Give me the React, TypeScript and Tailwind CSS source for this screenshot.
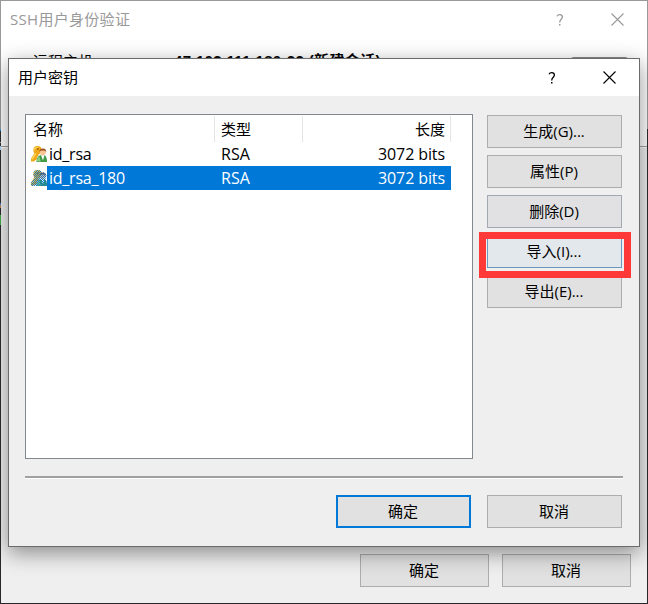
import type { ReactNode } from 'react';
import clsx from 'clsx';

type Key = { name: string; type: string; length: string; selected?: boolean };

const KEYS: Key[] = [
  { name: 'id_rsa', type: 'RSA', length: '3072 bits' },
  { name: 'id_rsa_180', type: 'RSA', length: '3072 bits', selected: true },
];

function CloseIcon() {
  return (
    <svg width="13" height="13" viewBox="0 0 13 13" fill="none" stroke="currentColor" strokeWidth="1.1">
      <path d="M0.5 0.5 12.5 12.5M12.5 0.5 0.5 12.5" />
    </svg>
  );
}

function HelpIcon() {
  return (
    <svg width="8" height="12" viewBox="0 0 8 12" fill="none" stroke="currentColor" strokeWidth="1.3">
      <path d="M1 2.2C1.6 1 2.6.7 3.7.7 5.4.7 6.4 1.6 6.4 3 6.4 5.2 3.7 5.3 3.7 8.4" />
      <path d="M3 10.8h1.5" strokeWidth="1.5" />
    </svg>
  );
}

function KeyUserIcon({ selected }: { selected?: boolean }) {
  return (
    <svg width="16" height="16" viewBox="0 0 16 16">
      <defs>
        <pattern id="dither" width="2" height="2" patternUnits="userSpaceOnUse">
          <path d="M0 0h1v1H0zM1 1h1v1H1z" fill="#0078d7" shapeRendering="crispEdges" />
        </pattern>
      </defs>
      <circle cx="6.5" cy="4.2" r="4.1" fill="#f0a818" />
      <path d="M4.2 6 8 8.5 3.2 15.5H0v-2.8zM4 10.5 6.2 12.2 5 14.2 2.7 13z" fill="#f0a818" />
      <path d="M3.2 4.2C3.6 2.4 5 1.4 7 1.5M5 7.3.9 13.4" stroke="#ffdb5c" strokeWidth="1.2" fill="none" />
      <circle cx="6.7" cy="2.9" r="1" fill="#a86408" />
      <path d="M5.5 16c0-4.2 2-6.8 4.5-6.8h3c2 0 3 3 3 6.8z" fill="#3f9a46" />
      <path d="M10 9.2h3.4L12 14.5z" fill="#fff" />
      <path d="M5.8 15.5c.2-2.5 1.2-4.4 2.6-5l1.4 5z" fill="#8bd083" />
      <circle cx="11.8" cy="6.3" r="2.9" fill="#f8c493" />
      <path d="M8.5 5.8C8.3 3.5 9.8 2.4 12 2.4s3.6 1.3 3.2 3.9l-1.1-1.5-3.9-.3z" fill="#9a5420" />
      {selected && (
        <path
          d="M6.5 0c2.3 0 3.7 1.2 4.1 2.5 2.6-.6 4.8.9 4.8 3.3 0 1.4-.6 2.6-1.4 3.4 1.6.8 2 3.6 2 6.8H0v-3.3l3.6-5.3C2.7 6.5 2.4 5.4 2.4 4.2 2.4 1.8 4.2 0 6.5 0z"
          fill="url(#dither)"
        />
      )}
    </svg>
  );
}

function Button({ children, className }: { children: ReactNode; className?: string }) {
  return (
    <button
      className={clsx(
        'flex h-[33px] shrink-0 items-center justify-center border pb-px pr-px text-[15px] leading-none',
        className ?? 'border-[#adadad] bg-[#e1e1e1]',
      )}
    >
      {children}
    </button>
  );
}

function KeyList() {
  return (
    <div className="h-[345px] w-[448px] border border-[#828790] bg-white">
      <div className="mt-px flex h-[26px] w-[425px] text-[15px] leading-[27px]">
        <div className="w-[189px] border-r border-[#e5e5e5] pl-[7px]">名称</div>
        <div className="w-[88px] border-r border-[#e5e5e5] pl-1.5">类型</div>
        <div className="w-[148px] border-r border-[#e5e5e5] pr-[5px] text-right">长度</div>
      </div>
      {KEYS.map((key) => (
        <div key={key.name} className="flex h-6 w-[425px] pl-[5px] text-[16px] leading-[25px]">
          <div className="w-4 pt-1">
            <KeyUserIcon selected={key.selected} />
          </div>
          <div className={clsx('flex flex-1', key.selected && 'bg-[#0078d7] text-white')}>
            <span className="w-[174px] pl-0.5 tracking-[-0.25px]">{key.name}</span>
            <span className="flex-1">{key.type}</span>
            <span className="pr-1.5 tracking-[-0.1px]">{key.length}</span>
          </div>
        </div>
      ))}
    </div>
  );
}

function KeyDialog() {
  return (
    <div className="absolute left-[8px] top-[58px] flex h-[489px] w-[632px] flex-col border border-[#6b6b6b] bg-[#efefef] shadow-[0_6px_20px_0px_rgba(0,0,0,0.42)]">
      <div className="flex h-[37px] items-center bg-white pl-[9px] pr-[23px]">
        <span className="flex-1 text-[15px]">用户密钥</span>
        <HelpIcon />
        <span className="ml-[47px]">
          <CloseIcon />
        </span>
      </div>

      <div className="flex justify-between pl-4 pr-[17px] pt-[18px]">
        <KeyList />
        <div className="relative mt-px flex w-[135px] flex-col gap-[7px]">
          <Button>生成(G)...</Button>
          <Button>属性(P)</Button>
          <Button className="border-[#a3a9b3] bg-[#e1e1e4]">删除(D)</Button>
          <Button className="border-[#6c98bd] bg-[#e3e8ec]">导入(I)...</Button>
          <Button>导出(E)...</Button>
          <div className="absolute -left-2 top-[117px] h-[46px] w-[152px] border-[7px] border-[#ff3838]" />
        </div>
      </div>

      <div className="ml-4 mr-4 mt-[17px] h-[3px] border-b border-white bg-[#a0a0a0]" />

      <div className="mt-4 flex justify-end gap-4 pr-[17px]">
        <Button className="w-[135px] border-2 border-[#0078d7] bg-[#e1e1e1]">确定</Button>
        <Button className="w-[135px] border-[#adadad] bg-[#e1e1e1]">取消</Button>
      </div>
    </div>
  );
}

function AuthWindow() {
  return (
    <div className="flex h-full flex-col border border-[#999] bg-[#efefef]">
      <div className="h-[145px] shrink-0 bg-white">
        <div className="flex h-[37px] items-center pl-[9px] pr-[23px] text-[#999]">
          <span className="flex-1 text-[15px] tracking-[0.3px]">SSH用户身份验证</span>
          <HelpIcon />
          <span className="ml-[47px]">
            <CloseIcon />
          </span>
        </div>
        <div className="mt-[13px] flex h-2 items-start overflow-hidden pl-8 text-[15px] leading-[20px]">
          <span className="w-[141px]">远程主机</span>
          <span className="font-['Liberation_Sans','Noto_Sans_CJK_SC',sans-serif] font-bold tracking-[0.35px]">
            47.103.111.180:22 (新建会话)
          </span>
          <span className="ml-auto mr-[17px] mt-[6px] h-10 w-[61px] rounded-[5px] border border-[#888]" />
        </div>
      </div>
      <div className="h-px shrink-0 bg-[#a0a0a0]" />
      <div className="h-px shrink-0 bg-white" />

      <div className="mt-[406px] flex gap-[13px] pl-[359px]">
        <Button className="w-[129px] border-[#adadad] bg-[#e1e1e1]">确定</Button>
        <Button className="w-[129px] border-[#adadad] bg-[#e1e1e1]">取消</Button>
      </div>
    </div>
  );
}

export default function App() {
  return (
    <div className="relative h-[604px] w-[648px] overflow-hidden font-['Open_Sans','Noto_Sans_CJK_SC',sans-serif] text-black">
      <AuthWindow />
      <KeyDialog />

      {/* terminal behind the window shows through along its edges */}
      <div className="pointer-events-none absolute inset-x-0 bottom-0 top-[129px] border-x border-b border-[#292729]" />
      <div className="absolute left-0 top-[129px] w-px">
        <div className="h-0.5 bg-[#2f86b8]" />
        <div className="mt-[11px] h-px bg-[#999]" />
        <div className="mt-[3px] h-1 bg-[#9cc4e4]" />
        <div className="mt-[53px] h-0.5 bg-[#3f6fa8]" />
        <div className="h-[3px] bg-[#a87850]" />
        <div className="mt-[7px] h-2.5 bg-[#37a043]" />
      </div>
    </div>
  );
}
